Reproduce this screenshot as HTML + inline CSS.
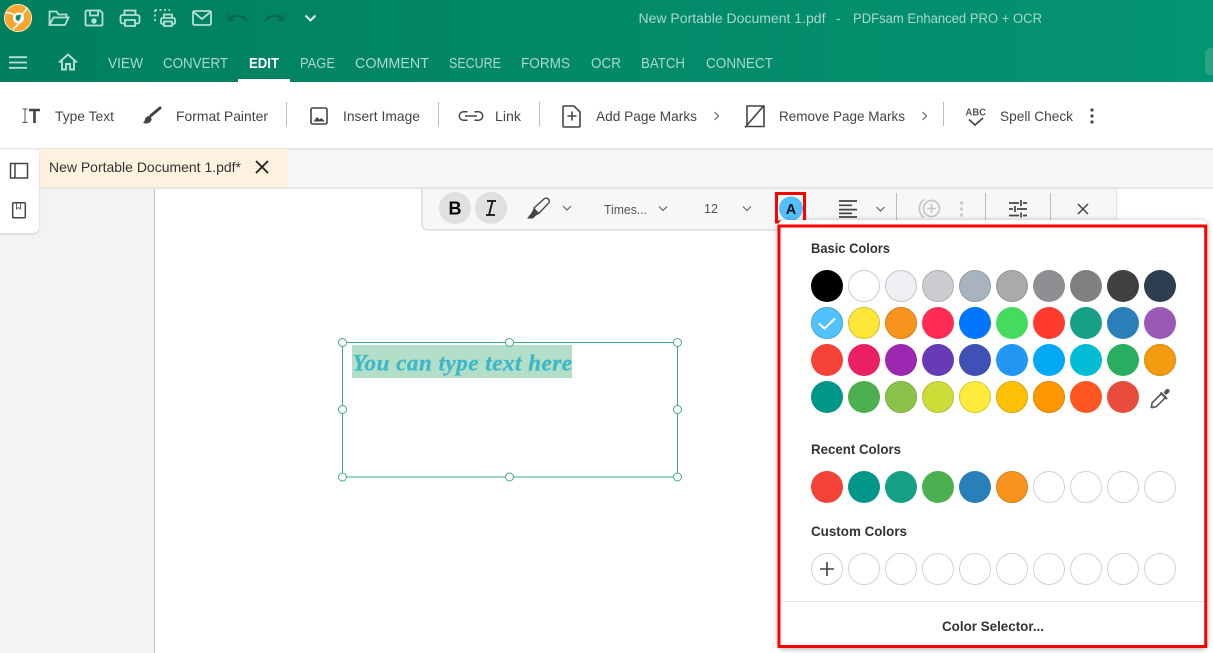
<!DOCTYPE html>
<html><head><meta charset="utf-8">
<style>
html,body{margin:0;padding:0;width:1213px;height:653px;overflow:hidden;background:#fff}
svg{display:block;font-family:"Liberation Sans",sans-serif}
.n{font-size:15px;fill:#a9d9ca}
.r{font-size:14px;fill:#444}
.h{font-size:14px;font-weight:bold;fill:#333}
.ti{stroke:#b5e0d3;fill:none;stroke-width:1.8}
.ic{stroke:#444;fill:none;stroke-width:1.6}
.ch{stroke:#666;fill:none;stroke-width:1.2}
</style></head><body>
<svg width="1213" height="653" viewBox="0 0 1213 653" xmlns="http://www.w3.org/2000/svg">
<defs>
<linearGradient id="g" x1="0" x2="1" y1="0" y2="0"><stop offset="0" stop-color="#007f5e"/><stop offset="1" stop-color="#049472"/></linearGradient>
<filter id="s" x="-10%" y="-10%" width="120%" height="120%"><feDropShadow dx="0" dy="1" stdDeviation="3" flood-color="#000" flood-opacity=".35"/></filter>
<filter id="s2" x="-30%" y="-10%" width="160%" height="120%"><feDropShadow dx="0" dy="1" stdDeviation="1" flood-color="#000" flood-opacity=".15"/></filter>
</defs>
<rect width="1213" height="653" fill="#fff"/>
<rect width="1213" height="82" fill="url(#g)"/>
<rect x="1205" y="48" width="20" height="27" rx="6" fill="#2ba486"/>
<!-- logo -->
<circle cx="18" cy="18" r="14" fill="#f7a531"/>
<circle cx="18" cy="18" r="13.500" fill="none" stroke="#fde3ba" stroke-width="1"/>
<path d="M22 14.500Q26 11 27 7.500M14 15Q10 12 6.500 13M19 23Q16 27 13 29" stroke="#fff" stroke-width="1.600" fill="none"/>
<circle cx="18.500" cy="18" r="5.500" fill="#fff"/>
<path d="M16 15.500l5-1-.500 3.500-2 3.500-3-2.500z" fill="#0a8a6a"/>
<!-- quick icons -->
<path class="ti" d="M49.500 25V11.500h7l2 3h8v3.500M49.500 25H65l3.500-7.500H53.500L49.500 25z"/>
<path class="ti" d="M87 10.500h13l2.500 2.500V24.500a1 1 0 0 1-1 1H86.500a1 1 0 0 1-1-1V12a1.500 1.500 0 0 1 1.500-1.500z"/>
<path class="ti" d="M90 11v4.500h8V11"/><circle cx="94" cy="21" r="2.700" fill="#b5e0d3"/>
<path class="ti" d="M124.500 15v-4.500h11V15M125 23.500h-2.500a2 2 0 0 1-2-2V17a2 2 0 0 1 2-2h15a2 2 0 0 1 2 2v4.500a2 2 0 0 1-2 2H135M125 20h10v6h-10z"/>
<path d="M155 10h15M155 10v12" stroke="#b5e0d3" stroke-width="1.800" stroke-dasharray="2 2.500" fill="none"/>
<path class="ti" d="M164 18v-3.500h8V18M164 24h-1.500a1.500 1.500 0 0 1-1.500-1.500v-3a1.500 1.500 0 0 1 1.500-1.500h11a1.500 1.500 0 0 1 1.500 1.500v3a1.500 1.500 0 0 1-1.500 1.500H172M164 21.500h8v4.500h-8z"/>
<rect class="ti" x="193" y="11" width="18" height="14" rx="1.500"/><path class="ti" d="M193.500 12l8.500 7 8.500-7"/>
<path d="M229 14.500v5.500h5.500M229.500 19.500c4-5 11-5.500 18 1.500" stroke="#0b6a52" stroke-width="2.400" fill="none"/>
<path d="M283 14.500v5.500h-5.500M282.500 19.500c-4-5-11-5.500-18 1.500" stroke="#0b6a52" stroke-width="2.400" fill="none"/>
<path d="M305.500 15.500l5 5 5-5" stroke="#e8f6f1" stroke-width="2" fill="none"/>
<text x="638.500" y="23" font-size="13.500" fill="#a9d9ca" textLength="187" lengthAdjust="spacingAndGlyphs">New Portable Document 1.pdf</text>
<text x="836" y="23" font-size="13.500" fill="#a9d9ca">-</text>
<text x="853" y="23" font-size="13.500" fill="#a9d9ca" textLength="189" lengthAdjust="spacingAndGlyphs">PDFsam Enhanced PRO + OCR</text>
<!-- nav -->
<path d="M9 57.200h18M9 62.500h18M9 67.800h18" stroke="#b5e0d3" stroke-width="1.800" fill="none"/>
<path d="M59 62.500L68 54.500l9 8M62 60.500V69.500h4v-5.500h4v5.500h4V60.500" stroke="#b5e0d3" stroke-width="1.900" fill="none"/>
<text class="n" x="108" y="68" textLength="35" lengthAdjust="spacingAndGlyphs">VIEW</text>
<text class="n" x="163" y="68" textLength="65" lengthAdjust="spacingAndGlyphs">CONVERT</text>
<text x="249" y="68" font-size="15" font-weight="bold" fill="#fff" textLength="30" lengthAdjust="spacingAndGlyphs">EDIT</text>
<rect x="238" y="79" width="52" height="3" fill="#fff"/>
<text class="n" x="300" y="68" textLength="35" lengthAdjust="spacingAndGlyphs">PAGE</text>
<text class="n" x="355" y="68" textLength="74" lengthAdjust="spacingAndGlyphs">COMMENT</text>
<text class="n" x="449" y="68" textLength="52" lengthAdjust="spacingAndGlyphs">SECURE</text>
<text class="n" x="521" y="68" textLength="49" lengthAdjust="spacingAndGlyphs">FORMS</text>
<text class="n" x="591" y="68" textLength="30" lengthAdjust="spacingAndGlyphs">OCR</text>
<text class="n" x="641" y="68" textLength="44" lengthAdjust="spacingAndGlyphs">BATCH</text>
<text class="n" x="706" y="68" textLength="67" lengthAdjust="spacingAndGlyphs">CONNECT</text>
<!-- ribbon -->
<path d="M22.500 109h5M22.500 122.500h5M25 109v13.500" stroke="#555" stroke-width="1" fill="none"/>
<path d="M29 110h11M34.500 110v13" stroke="#444" stroke-width="2.600" fill="none"/>
<text class="r" x="55" y="121" textLength="59" lengthAdjust="spacingAndGlyphs">Type Text</text>
<path d="M151 115.500L160 108" stroke="#444" stroke-width="3" stroke-linecap="round"/>
<path d="M149.500 116c-2.500 0-4 1.500-4.500 3.500-.300 1.500-1 2.500-2 3.500 3 1 6 .500 7.500-1.200 1.300-1.500 1.200-3.300.7-4.300z" fill="#444"/>
<text class="r" x="176" y="121" textLength="92" lengthAdjust="spacingAndGlyphs">Format Painter</text>
<rect x="286" y="102" width="1" height="24" fill="#bbb"/>
<rect x="311" y="108" width="16" height="16" rx="1.500" class="ic"/><path d="M313.500 121.500l3.500-4.500 2.500 2.500 2-1.500 3.500 3.500z" fill="#444"/>
<text class="r" x="343" y="121" textLength="77" lengthAdjust="spacingAndGlyphs">Insert Image</text>
<rect x="438" y="102" width="1" height="24" fill="#bbb"/>
<path d="M467.500 111.800h-4a4.200 4.200 0 0 0 0 8.400h4M474.500 111.800h4a4.200 4.200 0 0 1 0 8.400h-4M465 116h12" stroke="#444" stroke-width="1.500" fill="none"/>
<text class="r" x="495" y="121" textLength="26" lengthAdjust="spacingAndGlyphs">Link</text>
<rect x="539" y="102" width="1" height="24" fill="#bbb"/>
<path class="ic" d="M564 106h10l6 6v14a1 1 0 0 1-1 1h-15a1 1 0 0 1-1-1V107a1 1 0 0 1 1-1zM572 111.500v9M567.500 116h9"/>
<text class="r" x="596" y="121" textLength="101" lengthAdjust="spacingAndGlyphs">Add Page Marks</text>
<path class="ch" d="M714.500 112l4 4-4 4"/>
<path class="ic" d="M764 106h-17v20.500h17V106zM764 105.500L745 127.500"/>
<text class="r" x="779" y="121" textLength="126" lengthAdjust="spacingAndGlyphs">Remove Page Marks</text>
<path class="ch" d="M922.500 112l4 4-4 4"/>
<rect x="943" y="102" width="1" height="24" fill="#bbb"/>
<text x="965.500" y="115.500" font-size="10.500" font-weight="bold" fill="#555" textLength="20.500" lengthAdjust="spacingAndGlyphs">ABC</text>
<path d="M969 119.500l6 5.500 8-7" stroke="#444" stroke-width="1.700" fill="none"/>
<text class="r" x="1000" y="121" textLength="73" lengthAdjust="spacingAndGlyphs">Spell Check</text>
<circle cx="1092" cy="110" r="1.600" fill="#444"/><circle cx="1092" cy="116" r="1.600" fill="#444"/><circle cx="1092" cy="122" r="1.600" fill="#444"/>
<!-- tab bar -->
<rect x="0" y="148" width="1213" height="2" fill="#e6e6e6"/>
<rect x="0" y="150" width="1213" height="37" fill="#f6f6f6"/>
<rect x="0" y="187" width="1213" height="2" fill="#e6e6e6"/>
<rect x="39" y="149" width="248" height="38" fill="#fdf2df"/>
<text class="r" x="49" y="172" style="fill:#333" textLength="192" lengthAdjust="spacingAndGlyphs">New Portable Document 1.pdf*</text>
<path d="M256 161l12 12M268 161l-12 12" stroke="#222" stroke-width="1.900" fill="none"/>
<!-- left -->
<rect x="0" y="189" width="154" height="464" fill="#f3f3f3"/>
<rect x="154" y="189" width="1" height="464" fill="#bfbfbf"/>
<path d="M-4 149h36a7 7 0 0 1 7 7v70a7 7 0 0 1-7 7H-4z" fill="#fff" filter="url(#s2)"/>
<path d="M10.500 163.500h17v14.500h-17zM15 163.500V178" fill="none" stroke="#444" stroke-width="1.500"/>
<rect x="12.700" y="202.700" width="12.600" height="15" rx="1" fill="none" stroke="#444" stroke-width="1.500"/>
<path d="M16.500 203v6l2-1.500 2 1.500v-6" fill="none" stroke="#666" stroke-width="1"/>
<!-- toolbar -->
<path d="M422 189H1116V230H428a6 6 0 0 1-6-6z" fill="#f7f7f7"/>
<path d="M422 189v35a6 6 0 0 0 6 6H778" fill="none" stroke="#dedede" stroke-width="1.500"/>
<rect x="1116" y="189" width="1" height="33" fill="#e2e2e2"/>
<circle cx="455" cy="208" r="16" fill="#e0e0e0"/>
<text x="455" y="214.500" font-size="18" font-weight="bold" fill="#000" text-anchor="middle">B</text>
<circle cx="491" cy="208" r="16" fill="#e0e0e0"/>
<path d="M487 201h9M486 215h9M492.500 201l-3.500 14" stroke="#111" stroke-width="1.800" fill="none"/>
<path d="M534 208l10-9c1.500-1.300 3.500-.8 4.500.2 1 1 1.300 2.700 0 4l-9.500 10c-1.500-.5-3.500-2.500-5-5.200z" fill="none" stroke="#444" stroke-width="1.400"/>
<path d="M534 208l-3 5.500-4 5h6l3-3 3-1.500c-2-1-4-3.500-5-6z" fill="#444"/>
<path class="ch" d="M563 206l4 4 4-4"/>
<text x="604" y="214" font-size="12.500" fill="#555" textLength="43" lengthAdjust="spacingAndGlyphs">Times...</text>
<path class="ch" d="M659 206.500l4 4 4-4"/>
<text x="704" y="213" font-size="12.500" fill="#555" textLength="14" lengthAdjust="spacingAndGlyphs">12</text>
<path class="ch" d="M743 206.500l4 4 4-4"/>
<circle cx="791" cy="208.500" r="12" fill="#52c1fb"/>
<text x="791" y="214" font-size="14.500" font-weight="bold" fill="#111" text-anchor="middle">A</text>
<rect x="776.500" y="193.500" width="28" height="28.500" fill="none" stroke="#f00" stroke-width="3"/>
<path d="M839 201h18M839 205.300h13M839 209.600h18M839 213.400h13M839 217h18" stroke="#444" stroke-width="1.700" fill="none"/>
<path class="ch" d="M876.500 207l4 4 4-4"/>
<rect x="896" y="193" width="1" height="29" fill="#bdbdbd"/>
<circle cx="931.500" cy="208.500" r="8" fill="none" stroke="#c8c8c8" stroke-width="1.800"/>
<path d="M931.500 204v9M927 208.500h9" stroke="#c8c8c8" stroke-width="1.600"/>
<path d="M924 199.500a11 11 0 0 0 0 18" fill="none" stroke="#c8c8c8" stroke-width="1.800"/>
<circle cx="961.500" cy="203" r="1.700" fill="#ccc"/><circle cx="961.500" cy="209" r="1.700" fill="#ccc"/><circle cx="961.500" cy="215" r="1.700" fill="#ccc"/>
<rect x="985" y="193" width="1" height="29" fill="#bdbdbd"/>
<path d="M1009 203h10M1023 203h4M1021 200v6M1009 209h4M1017 209h10M1015 206v6M1009 215.500h10M1023 215.500h4M1021 212.500v5" stroke="#444" stroke-width="1.700" fill="none"/>
<rect x="1050" y="193" width="1" height="29" fill="#bdbdbd"/>
<path d="M1078 204l10 10M1088 204l-10 10" stroke="#444" stroke-width="1.500" fill="none"/>
<!-- text box -->
<rect x="342.500" y="342.500" width="335" height="134.500" fill="#fff" stroke="#3fae78" stroke-width="1"/>
<rect x="352" y="345" width="220" height="33" fill="#b3dec8"/>
<text x="352.500" y="370.500" font-family="Liberation Serif,serif" font-size="23" font-weight="bold" font-style="italic" fill="#3cb8c8" stroke="#3cb8c8" stroke-width=".3" textLength="219.500" lengthAdjust="spacing">You can type text here</text>
<g fill="#fff" stroke="#3fae78" stroke-width="1">
<circle cx="342.500" cy="342.500" r="4"/><circle cx="509.500" cy="342.500" r="4"/><circle cx="677.500" cy="342.500" r="4"/>
<circle cx="342.500" cy="409.500" r="4"/><circle cx="677.500" cy="409.500" r="4"/>
<circle cx="342.500" cy="477" r="4"/><circle cx="509.500" cy="477" r="4"/><circle cx="677.500" cy="477" r="4"/>
</g>
<!-- popup -->
<rect x="778" y="220" width="429" height="428" rx="6" fill="#fff" filter="url(#s)"/>
<rect x="779" y="226" width="426.700" height="420.500" fill="#fff" stroke="#f00" stroke-width="3"/>
<text class="h" x="811" y="253" font-size="13.500" textLength="79" lengthAdjust="spacingAndGlyphs">Basic Colors</text>
<g stroke-width="1">
<circle cx="827" cy="286" r="16" fill="#000"/>
<circle cx="864" cy="286" r="15.500" fill="#fff" stroke="#ccc"/>
<circle cx="901" cy="286" r="15.500" fill="#efeff4" stroke="#c4c4c8"/>
<circle cx="938" cy="286" r="15.500" fill="#cbcbd0" stroke="#b0b0b4"/>
<circle cx="975" cy="286" r="15.500" fill="#a9b3bd" stroke="#939ca5"/>
<circle cx="1012" cy="286" r="15.500" fill="#aaaaaa" stroke="#969696"/>
<circle cx="1049" cy="286" r="16" fill="#8e8e93"/>
<circle cx="1086" cy="286" r="16" fill="#808080"/>
<circle cx="1123" cy="286" r="16" fill="#404040"/>
<circle cx="1160" cy="286" r="16" fill="#2c3e50"/>
<circle cx="827" cy="323" r="15.500" fill="#52c1fd" stroke="#45a5d8"/>
<circle cx="864" cy="323" r="15.500" fill="#ffe638" stroke="#d8c030"/>
<circle cx="901" cy="323" r="15.500" fill="#f7941d" stroke="#d98018"/>
<circle cx="938" cy="323" r="16" fill="#ff2d55"/>
<circle cx="975" cy="323" r="16" fill="#0076ff"/>
<circle cx="1012" cy="323" r="16" fill="#44db5e"/>
<circle cx="1049" cy="323" r="16" fill="#ff3b30"/>
<circle cx="1086" cy="323" r="16" fill="#16a085"/>
<circle cx="1123" cy="323" r="16" fill="#2980b9"/>
<circle cx="1160" cy="323" r="16" fill="#9b59b6"/>
<circle cx="827" cy="360" r="16" fill="#f44336"/>
<circle cx="864" cy="360" r="16" fill="#e91e63"/>
<circle cx="901" cy="360" r="16" fill="#9c27b0"/>
<circle cx="938" cy="360" r="16" fill="#673ab7"/>
<circle cx="975" cy="360" r="16" fill="#3f51b5"/>
<circle cx="1012" cy="360" r="16" fill="#2196f3"/>
<circle cx="1049" cy="360" r="16" fill="#03a9f4"/>
<circle cx="1086" cy="360" r="16" fill="#00bcd4"/>
<circle cx="1123" cy="360" r="16" fill="#27ae60"/>
<circle cx="1160" cy="360" r="15.500" fill="#f39c12" stroke="#d48810"/>
<circle cx="827" cy="397" r="16" fill="#009688"/>
<circle cx="864" cy="397" r="16" fill="#4caf50"/>
<circle cx="901" cy="397" r="15.500" fill="#8bc34a" stroke="#7aab41"/>
<circle cx="938" cy="397" r="15.500" fill="#cddc39" stroke="#b3c032"/>
<circle cx="975" cy="397" r="15.500" fill="#ffeb3b" stroke="#dcca33"/>
<circle cx="1012" cy="397" r="15.500" fill="#ffc107" stroke="#dca706"/>
<circle cx="1049" cy="397" r="15.500" fill="#ff9800" stroke="#dc8400"/>
<circle cx="1086" cy="397" r="16" fill="#ff5722"/>
<circle cx="1123" cy="397" r="16" fill="#e74c3c"/>
</g>
<path d="M819 323.500l5.500 5 10.500-10" stroke="#fff" stroke-width="2" fill="none"/>
<path d="M1161.500 393.500l-9.500 9.500-.3 3-.5 1 1 .7 1-.5 3-.4 9.500-9.500z" fill="#fff" stroke="#555" stroke-width="1.600"/>
<path d="M1160.500 392.500l6.500 6.500" stroke="#555" stroke-width="2.200" fill="none"/>
<path d="M1163.500 392.500l2.500-3a2.100 2.100 0 0 1 3 3l-3 2.500z" fill="#555"/>
<text class="h" x="811" y="454" font-size="13.500" textLength="90" lengthAdjust="spacingAndGlyphs">Recent Colors</text>
<circle cx="827" cy="487" r="16" fill="#f44336"/>
<circle cx="864" cy="487" r="16" fill="#009688"/>
<circle cx="901" cy="487" r="16" fill="#16a085"/>
<circle cx="938" cy="487" r="16" fill="#4caf50"/>
<circle cx="975" cy="487" r="16" fill="#2980b9"/>
<circle cx="1012" cy="487" r="15.500" fill="#f7941d" stroke="#d98018"/>
<g fill="#fff" stroke="#d2d2d2" stroke-width="1">
<circle cx="1049" cy="487" r="15.500"/><circle cx="1086" cy="487" r="15.500"/><circle cx="1123" cy="487" r="15.500"/><circle cx="1160" cy="487" r="15.500"/>
</g>
<text class="h" x="811" y="536" font-size="13.500" textLength="96" lengthAdjust="spacingAndGlyphs">Custom Colors</text>
<g fill="#fff" stroke="#d2d2d2" stroke-width="1">
<circle cx="827" cy="569" r="15.500"/><circle cx="864" cy="569" r="15.500"/><circle cx="901" cy="569" r="15.500"/><circle cx="938" cy="569" r="15.500"/><circle cx="975" cy="569" r="15.500"/><circle cx="1012" cy="569" r="15.500"/><circle cx="1049" cy="569" r="15.500"/><circle cx="1086" cy="569" r="15.500"/><circle cx="1123" cy="569" r="15.500"/><circle cx="1160" cy="569" r="15.500"/>
</g>
<path d="M827 562v14M820 569h14" stroke="#444" stroke-width="1.600" fill="none"/>
<rect x="781" y="601" width="423" height="1" fill="#e2e2e2"/>
<text class="h" x="942" y="631" font-size="13.500" textLength="102" lengthAdjust="spacingAndGlyphs">Color Selector...</text>
</svg>
</body></html>
